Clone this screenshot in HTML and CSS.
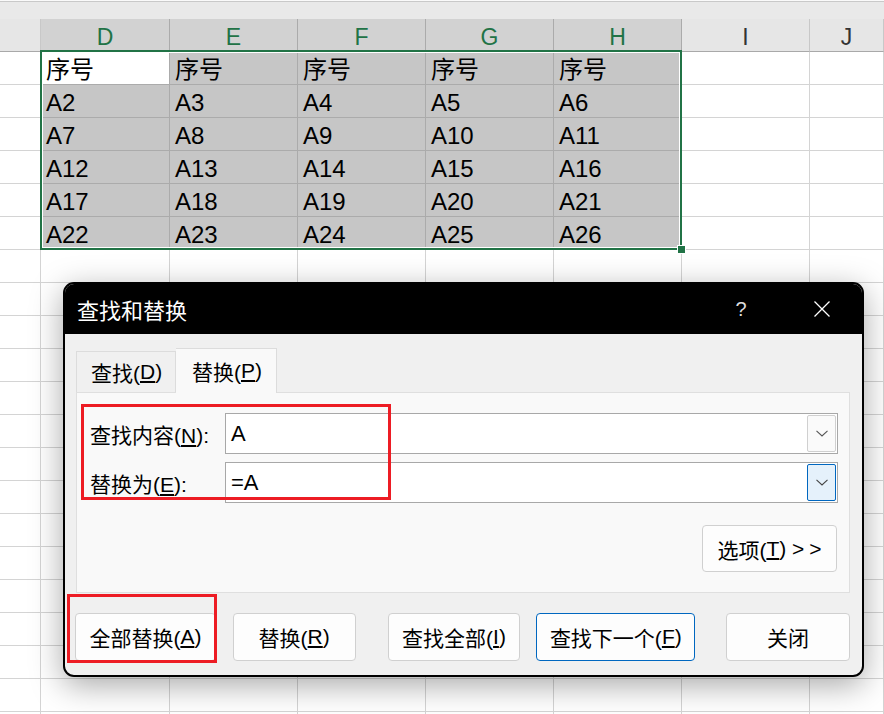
FILE: index.html
```html
<!DOCTYPE html>
<html lang="zh-CN">
<head>
<meta charset="utf-8">
<title>查找和替换</title>
<link rel="stylesheet" href="styles.css">
</head>
<body>
<div class="sheet">
  <div class="fbar"></div>
  <div class="gap"></div>
  <div class="row head">
    <div class="c"></div>
    <div class="c s">D</div>
    <div class="c s">E</div>
    <div class="c s">F</div>
    <div class="c s">G</div>
    <div class="c s">H</div>
    <div class="c">I</div>
    <div class="c">J</div>
  </div>
  <div class="row"><div class="c"></div><div class="c s act">序号</div><div class="c s">序号</div><div class="c s">序号</div><div class="c s">序号</div><div class="c s">序号</div><div class="c"></div><div class="c"></div></div>
  <div class="row"><div class="c"></div><div class="c s">A2</div><div class="c s">A3</div><div class="c s">A4</div><div class="c s">A5</div><div class="c s">A6</div><div class="c"></div><div class="c"></div></div>
  <div class="row"><div class="c"></div><div class="c s">A7</div><div class="c s">A8</div><div class="c s">A9</div><div class="c s">A10</div><div class="c s">A11</div><div class="c"></div><div class="c"></div></div>
  <div class="row"><div class="c"></div><div class="c s">A12</div><div class="c s">A13</div><div class="c s">A14</div><div class="c s">A15</div><div class="c s">A16</div><div class="c"></div><div class="c"></div></div>
  <div class="row"><div class="c"></div><div class="c s">A17</div><div class="c s">A18</div><div class="c s">A19</div><div class="c s">A20</div><div class="c s">A21</div><div class="c"></div><div class="c"></div></div>
  <div class="row"><div class="c"></div><div class="c s">A22</div><div class="c s">A23</div><div class="c s">A24</div><div class="c s">A25</div><div class="c s">A26</div><div class="c"></div><div class="c"></div></div>
  <div class="row"><div class="c"></div><div class="c"></div><div class="c"></div><div class="c"></div><div class="c"></div><div class="c"></div><div class="c"></div><div class="c"></div></div>
  <div class="row"><div class="c"></div><div class="c"></div><div class="c"></div><div class="c"></div><div class="c"></div><div class="c"></div><div class="c"></div><div class="c"></div></div>
  <div class="row"><div class="c"></div><div class="c"></div><div class="c"></div><div class="c"></div><div class="c"></div><div class="c"></div><div class="c"></div><div class="c"></div></div>
  <div class="row"><div class="c"></div><div class="c"></div><div class="c"></div><div class="c"></div><div class="c"></div><div class="c"></div><div class="c"></div><div class="c"></div></div>
  <div class="row"><div class="c"></div><div class="c"></div><div class="c"></div><div class="c"></div><div class="c"></div><div class="c"></div><div class="c"></div><div class="c"></div></div>
  <div class="row"><div class="c"></div><div class="c"></div><div class="c"></div><div class="c"></div><div class="c"></div><div class="c"></div><div class="c"></div><div class="c"></div></div>
  <div class="row"><div class="c"></div><div class="c"></div><div class="c"></div><div class="c"></div><div class="c"></div><div class="c"></div><div class="c"></div><div class="c"></div></div>
  <div class="row"><div class="c"></div><div class="c"></div><div class="c"></div><div class="c"></div><div class="c"></div><div class="c"></div><div class="c"></div><div class="c"></div></div>
  <div class="row"><div class="c"></div><div class="c"></div><div class="c"></div><div class="c"></div><div class="c"></div><div class="c"></div><div class="c"></div><div class="c"></div></div>
  <div class="row"><div class="c"></div><div class="c"></div><div class="c"></div><div class="c"></div><div class="c"></div><div class="c"></div><div class="c"></div><div class="c"></div></div>
  <div class="row"><div class="c"></div><div class="c"></div><div class="c"></div><div class="c"></div><div class="c"></div><div class="c"></div><div class="c"></div><div class="c"></div></div>
  <div class="row"><div class="c"></div><div class="c"></div><div class="c"></div><div class="c"></div><div class="c"></div><div class="c"></div><div class="c"></div><div class="c"></div></div>
  <div class="row"><div class="c"></div><div class="c"></div><div class="c"></div><div class="c"></div><div class="c"></div><div class="c"></div><div class="c"></div><div class="c"></div></div>
  <div class="row"><div class="c"></div><div class="c"></div><div class="c"></div><div class="c"></div><div class="c"></div><div class="c"></div><div class="c"></div><div class="c"></div></div>
  <div class="row"><div class="c"></div><div class="c"></div><div class="c"></div><div class="c"></div><div class="c"></div><div class="c"></div><div class="c"></div><div class="c"></div></div>
</div>

<div class="selection"><span class="handle"></span></div>

<div class="dialog">
  <div class="titlebar">
    <span class="title">查找和替换</span>
    <span class="help">?</span>
    <span class="close">
      <svg width="16" height="16" viewBox="0 0 16 16"><path d="M0.5 0.5L15.5 15.5M15.5 0.5L0.5 15.5" stroke="#fff" stroke-width="1.3" fill="none"/></svg>
    </span>
  </div>
  <div class="dbody">
    <div class="tabs">
      <div class="tab tab-find">查找(<u>D</u>)</div>
      <div class="tab tab-replace">替换(<u>P</u>)</div>
    </div>
    <div class="panel">
      <div class="frow">
        <span class="label">查找内容(<u>N</u>):</span>
        <div class="input">
          <span class="val">A</span>
          <span class="dd"><svg width="12" height="7" viewBox="0 0 12 7"><polyline points="0.5,0.8 6,6 11.5,0.8" stroke="#555" stroke-width="1.1" fill="none"/></svg></span>
        </div>
      </div>
      <div class="frow">
        <span class="label">替换为(<u>E</u>):</span>
        <div class="input">
          <span class="val">=A</span>
          <span class="dd dd-focus"><svg width="12" height="7" viewBox="0 0 12 7"><polyline points="0.5,0.8 6,6 11.5,0.8" stroke="#444" stroke-width="1.1" fill="none"/></svg></span>
        </div>
      </div>
      <div class="opts">
        <div class="btn btn-opt">选项(<u>T</u>) <span class="arrows">&gt;&gt;</span></div>
      </div>
    </div>
    <div class="actions">
      <div class="btn b-all">全部替换(<u>A</u>)</div>
      <div class="btn b-rep">替换(<u>R</u>)</div>
      <div class="btn b-findall">查找全部(<u>I</u>)</div>
      <div class="btn b-next btn-primary">查找下一个(<u>F</u>)</div>
      <div class="btn b-close">关闭</div>
    </div>
  </div>
</div>

<div class="mark mark-fields"></div>
<div class="mark mark-button"></div>
</body>
</html>
```

FILE: styles.css
```css
* { box-sizing: border-box; }
html, body { margin: 0; padding: 0; }
body {
  width: 884px;
  height: 714px;
  overflow: hidden;
  position: relative;
  background: #fff;
  color: #000;
  font-family: "Liberation Sans", "Noto Sans CJK SC", sans-serif;
}

/* spreadsheet */
.fbar { height: 2px; background: #fafafa; border-bottom: 1px solid #c9c9c9; }
.gap { height: 17px; background: #e9e9e9; }
.row {
  display: grid;
  grid-template-columns: 41px 129px 128px 128px 128px 128px 128px 1fr;
  height: 33px;
}
.c {
  height: 33px;
  border-right: 1px solid #d4d4d4;
  border-bottom: 1px solid #d4d4d4;
  font-size: 24px;
  line-height: 28px;
  padding: 4px 0 0 5px;
  white-space: nowrap;
  overflow: hidden;
}
.c.s { background: #c6c6c6; border-color: #ababab; }
.c.act { background: #fff; }

.head .c {
  background: #e6e6e6;
  color: #333;
  text-align: center;
  font-size: 23px;
  padding: 4px 0 0 0;
  line-height: 28px;
  border-right-color: #c8c8c8;
  border-bottom-color: #a9a9a9;
}
.head .c.s {
  background: #d2d2d2;
  color: #217346;
  border-right-color: #ababab;
}

.selection {
  position: absolute;
  left: 40px;
  top: 50px;
  width: 642px;
  height: 200px;
  border: 2px solid #217346;
  box-shadow: inset 0 0 0 1px #fff;
}
.handle {
  position: absolute;
  right: -6px;
  bottom: -6px;
  width: 9px;
  height: 9px;
  background: #217346;
  border: 1px solid #fff;
}

/* dialog */
.dialog {
  position: absolute;
  left: 63px;
  top: 282px;
  width: 801px;
  height: 395px;
  border: 2px solid #000;
  border-radius: 11px;
  background: #f0f0f0;
  box-shadow: 0 8px 32px rgba(0, 0, 0, 0.35);
  overflow: hidden;
  display: flex;
  flex-direction: column;
}
.titlebar {
  height: 50px;
  flex: none;
  background: #000;
  color: #fff;
  display: flex;
  align-items: center;
  padding-left: 12px;
}
.title { font-size: 22px; }
.help {
  margin-left: auto;
  width: 40px;
  text-align: center;
  font-size: 20px;
  color: #ddd;
}
.close {
  margin-left: 37px;
  margin-right: 16px;
  width: 48px;
  display: flex;
  justify-content: center;
}

.dbody {
  flex: 1;
  padding: 14px 12px 14px 11px;
  display: flex;
  flex-direction: column;
}
.tabs { display: flex; align-items: flex-end; height: 44px; flex: none; }
.tab {
  height: 41px;
  border: 1px solid #dcdcdc;
  border-bottom: 0;
  font-size: 21px;
  display: flex;
  align-items: center;
}
.tab-find { width: 100px; padding-left: 14px; background: #f0f0f0; }
.tab-replace {
  width: 101px;
  height: 45px;
  margin-bottom: -1px;
  padding-left: 16px;
  background: #f9f9f9;
  border-left: 0;
  position: relative;
  z-index: 1;
}

.panel {
  height: 201px;
  flex: none;
  border: 1px solid #dfdfdf;
  background: #f9f9f9;
  padding: 20px 11px 0 13px;
}
.frow { display: flex; align-items: center; height: 41px; }
.frow + .frow { margin-top: 8px; }
.label { width: 135px; font-size: 21px; flex: none; }
.input {
  flex: 1;
  height: 41px;
  border: 1px solid #a8a8a8;
  background: #fff;
  display: flex;
  align-items: center;
  padding-left: 5px;
  font-size: 22px;
}
.val { flex: 1; }
.dd {
  width: 29px;
  height: 37px;
  margin-right: 1px;
  border: 1px solid #d0d0d0;
  border-radius: 2px;
  background: #fafafa;
  display: flex;
  align-items: center;
  justify-content: center;
}
.dd-focus { border-color: #0067c0; background: #e5f1fb; }

.opts { display: flex; justify-content: flex-end; margin-top: 22px; }
.btn {
  border: 1px solid #d0d0d0;
  border-radius: 4px;
  background: #fdfdfd;
  font-size: 21px;
  display: flex;
  align-items: center;
  justify-content: center;
  white-space: pre;
}
.btn-opt { width: 135px; height: 47px; margin-right: 1px; }
.arrows { letter-spacing: 5px; margin-right: -5px; }

.actions { display: flex; margin-top: 20px; }
.actions .btn { height: 48px; }
.b-all { width: 141px; margin-left: -1px; }
.b-rep { width: 123px; margin-left: 17px; }
.b-findall { width: 133px; margin-left: 32px; }
.b-next { width: 159px; margin-left: 16px; }
.b-close { width: 124px; margin-left: 31px; }
.btn-primary { border-color: #0067c0; }

/* red annotation boxes */
.mark { position: absolute; border: 3px solid #ed1c24; }
.mark-fields { left: 81px; top: 404px; width: 310px; height: 96px; }
.mark-button { left: 67px; top: 594px; width: 150px; height: 69px; }
```
